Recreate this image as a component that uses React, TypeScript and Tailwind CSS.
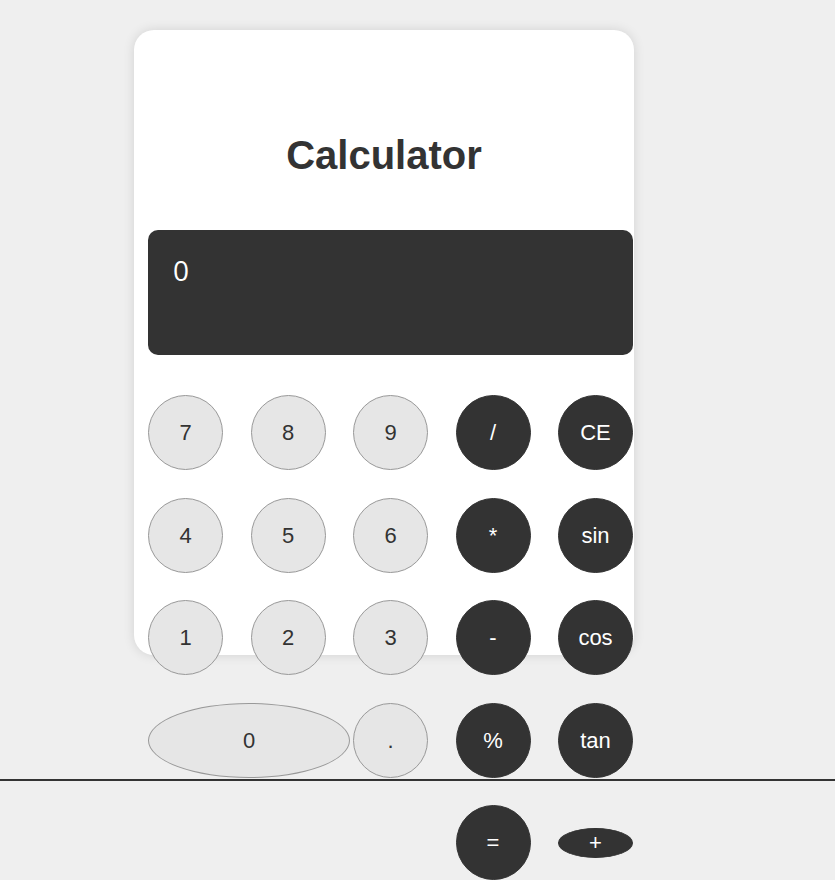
const rows: { label: string; dark?: boolean; wide?: boolean; start4?: boolean; flat?: boolean }[] = [
  { label: "7" }, { label: "8" }, { label: "9" }, { label: "/", dark: true }, { label: "CE", dark: true },
  { label: "4" }, { label: "5" }, { label: "6" }, { label: "*", dark: true }, { label: "sin", dark: true },
  { label: "1" }, { label: "2" }, { label: "3" }, { label: "-", dark: true }, { label: "cos", dark: true },
  { label: "0", wide: true }, { label: "." }, { label: "%", dark: true }, { label: "tan", dark: true },
  { label: "=", dark: true, start4: true }, { label: "+", dark: true, flat: true },
]

export default function App() {
  return (
    <main className="min-h-[880px] bg-[#efefef] pt-[30px] font-['Liberation_Sans',Arial,sans-serif]">
      <div className="ml-[134px] h-[625px] w-[500px] rounded-[20px] bg-white pl-[14px] pt-[102px] shadow-[0_0_12px_rgba(0,0,0,0.12)]">
        <h1 className="-ml-[14px] w-[500px] text-center text-[40px] leading-[46px] font-bold text-[#333]">Calculator</h1>
        <div className="mt-[52px] h-[125px] w-[485px] rounded-[10px] bg-[#333] px-[25px] pt-[20px] font-['Open_Sans',sans-serif] text-[28px] leading-[40px] text-white">
          0
        </div>
        <div className="mt-[40px] grid grid-cols-[repeat(5,75px)] gap-[27.5px]">
          {rows.map((b) => (
            <button
              key={b.label}
              className={
                "flex items-center justify-center rounded-[50%] border text-[22px] " +
                (b.dark ? "border-[#333] bg-[#333] text-white " : "border-[#999] bg-[#e6e6e6] text-[#333] ") +
                (b.wide ? "col-span-2 h-[75px] w-[202px] " : "") +
                (b.start4 ? "col-start-4 h-[75px] " : "") +
                (b.flat ? "h-[30px] self-center text-[20px] " : "") +
                (!b.wide && !b.start4 && !b.flat ? "h-[75px] " : "")
              }
            >
              {b.label}
            </button>
          ))}
        </div>
      </div>
      <div className="mt-[124px] h-[2px] w-full bg-[#333]" />
    </main>
  )
}
